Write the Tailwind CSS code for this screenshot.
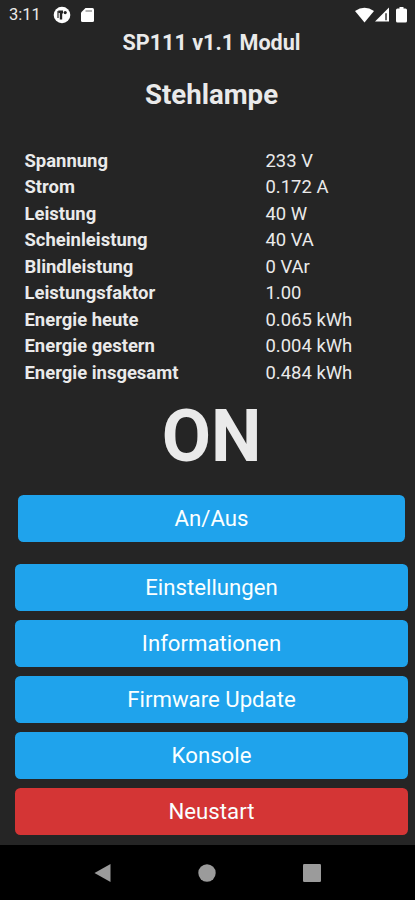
<!DOCTYPE html>
<html lang="de">
<head>
<meta charset="utf-8">
<meta name="viewport" content="width=device-width, initial-scale=1">
<title>SP111 v1.1 Modul</title>
<script src="https://cdn.jsdelivr.net/npm/@tailwindcss/browser@4"></script>
</head>
<body class="bg-[#252525]">
<div class="flex h-[900px] w-[415px] flex-col overflow-hidden bg-[#252525] font-[Roboto,sans-serif] text-[#eaeaea]">
  <header class="flex h-[30px] shrink-0 items-center justify-between pl-[9px] pr-[8px]">
    <div class="flex items-center">
      <span class="w-[44px] text-[16.5px] leading-[30px]">3:11</span>
      <svg class="h-[18px] w-[18px]" viewBox="0 0 18 18"><circle cx="9" cy="9" r="8.3" fill="#fff"/><path d="M5.300 4.500H10V7.500H9.200V13.500H6.800V7H5.300Z" fill="#252525"/><path d="M5 5V12" stroke="#252525" stroke-width="1.200"/><circle cx="12.200" cy="6.600" r="1.600" fill="#252525"/></svg>
      <svg class="ml-[10px] h-[16px] w-[13px]" viewBox="0 0 13 16"><path d="M4.500 1H11.500Q13 1 13 2.500V13.500Q13 15 11.500 15H1.500Q0 15 0 13.500V5.500Z" fill="#fff"/><path d="M4.500 4H11" stroke="#999" stroke-width="1.500"/></svg>
    </div>
    <div class="flex items-center">
      <svg class="h-[16px] w-[19px]" viewBox="0 0 19 16"><path d="M0 4Q9.500-2.500 19 4L9.500 15.500Z" fill="#fff"/></svg>
      <svg class="ml-px h-[16px] w-[14px]" viewBox="0 0 15 16"><path d="M15 0V15H0Z" fill="#fff"/><path d="M11.800 6V13.500" stroke="#252525" stroke-width="1.500"/></svg>
      <svg class="ml-[7px] h-[16px] w-[11px]" viewBox="0 0 11 16"><path d="M3.500 0H7.500V1.500H9.500Q11 1.500 11 3V14Q11 15.500 9.500 15.500H1.500Q0 15.500 0 14V3Q0 1.500 1.500 1.500H3.500Z" fill="#fff"/></svg>
    </div>
  </header>
  <main class="flex h-[815px] shrink-0 flex-col pl-[15px] pr-[7px]">
    <h3 class="h-[26px] text-center text-[21.6px] leading-[26px] font-bold">SP111 v1.1 Modul</h3>
    <h2 class="mt-[22px] h-[34px] text-center text-[27.6px] leading-[34px] font-bold">Stehlampe</h2>
    <dl class="mt-[35.6px] grid auto-rows-[26.55px] grid-cols-[241px_1fr] pl-[9.5px] text-[18.45px] leading-[26.55px]">
      <dt class="font-bold">Spannung</dt><dd>233 V</dd>
      <dt class="font-bold">Strom</dt><dd>0.172 A</dd>
      <dt class="font-bold">Leistung</dt><dd>40 W</dd>
      <dt class="font-bold">Scheinleistung</dt><dd>40 VA</dd>
      <dt class="font-bold">Blindleistung</dt><dd>0 VAr</dd>
      <dt class="font-bold">Leistungsfaktor</dt><dd>1.00</dd>
      <dt class="font-bold">Energie heute</dt><dd>0.065 kWh</dd>
      <dt class="font-bold">Energie gestern</dt><dd>0.004 kWh</dd>
      <dt class="font-bold">Energie insgesamt</dt><dd>0.484 kWh</dd>
    </dl>
    <div class="mt-[8.4px] h-[84px] text-center text-[71.500px] leading-[84px] font-bold">ON</div>
    <div class="mt-[16px] px-[2.600px]"><button class="block h-[47px] w-full rounded-[5.500px] bg-[#1fa3ec] text-[22.2px] leading-[47px] text-[#faffff]">An/Aus</button></div>
    <nav class="mt-[22.500px] flex flex-col gap-[8.800px] text-[22.2px] leading-[47px] text-[#faffff]">
      <button class="h-[47px] rounded-[5.500px] bg-[#1fa3ec]">Einstellungen</button>
      <button class="h-[47px] rounded-[5.500px] bg-[#1fa3ec]">Informationen</button>
      <button class="h-[47px] rounded-[5.500px] bg-[#1fa3ec]">Firmware Update</button>
      <button class="h-[47px] rounded-[5.500px] bg-[#1fa3ec]">Konsole</button>
      <button class="h-[47px] rounded-[5.500px] bg-[#d43535]">Neustart</button>
    </nav>
  </main>
  <footer class="flex grow items-center justify-center gap-[87px] bg-black">
    <svg class="h-[20px] w-[17px]" viewBox="0 0 17 20"><path d="M.500 10L16.500 1V19Z" fill="#9b9b9b"/></svg>
    <svg class="h-[18px] w-[18px]" viewBox="0 0 18 18"><circle cx="9" cy="9" r="8.700" fill="#9b9b9b"/></svg>
    <svg class="h-[18px] w-[18px]" viewBox="0 0 18 18"><rect width="18" height="18" rx="1.200" fill="#9b9b9b"/></svg>
  </footer>
</div>
</body>
</html>
